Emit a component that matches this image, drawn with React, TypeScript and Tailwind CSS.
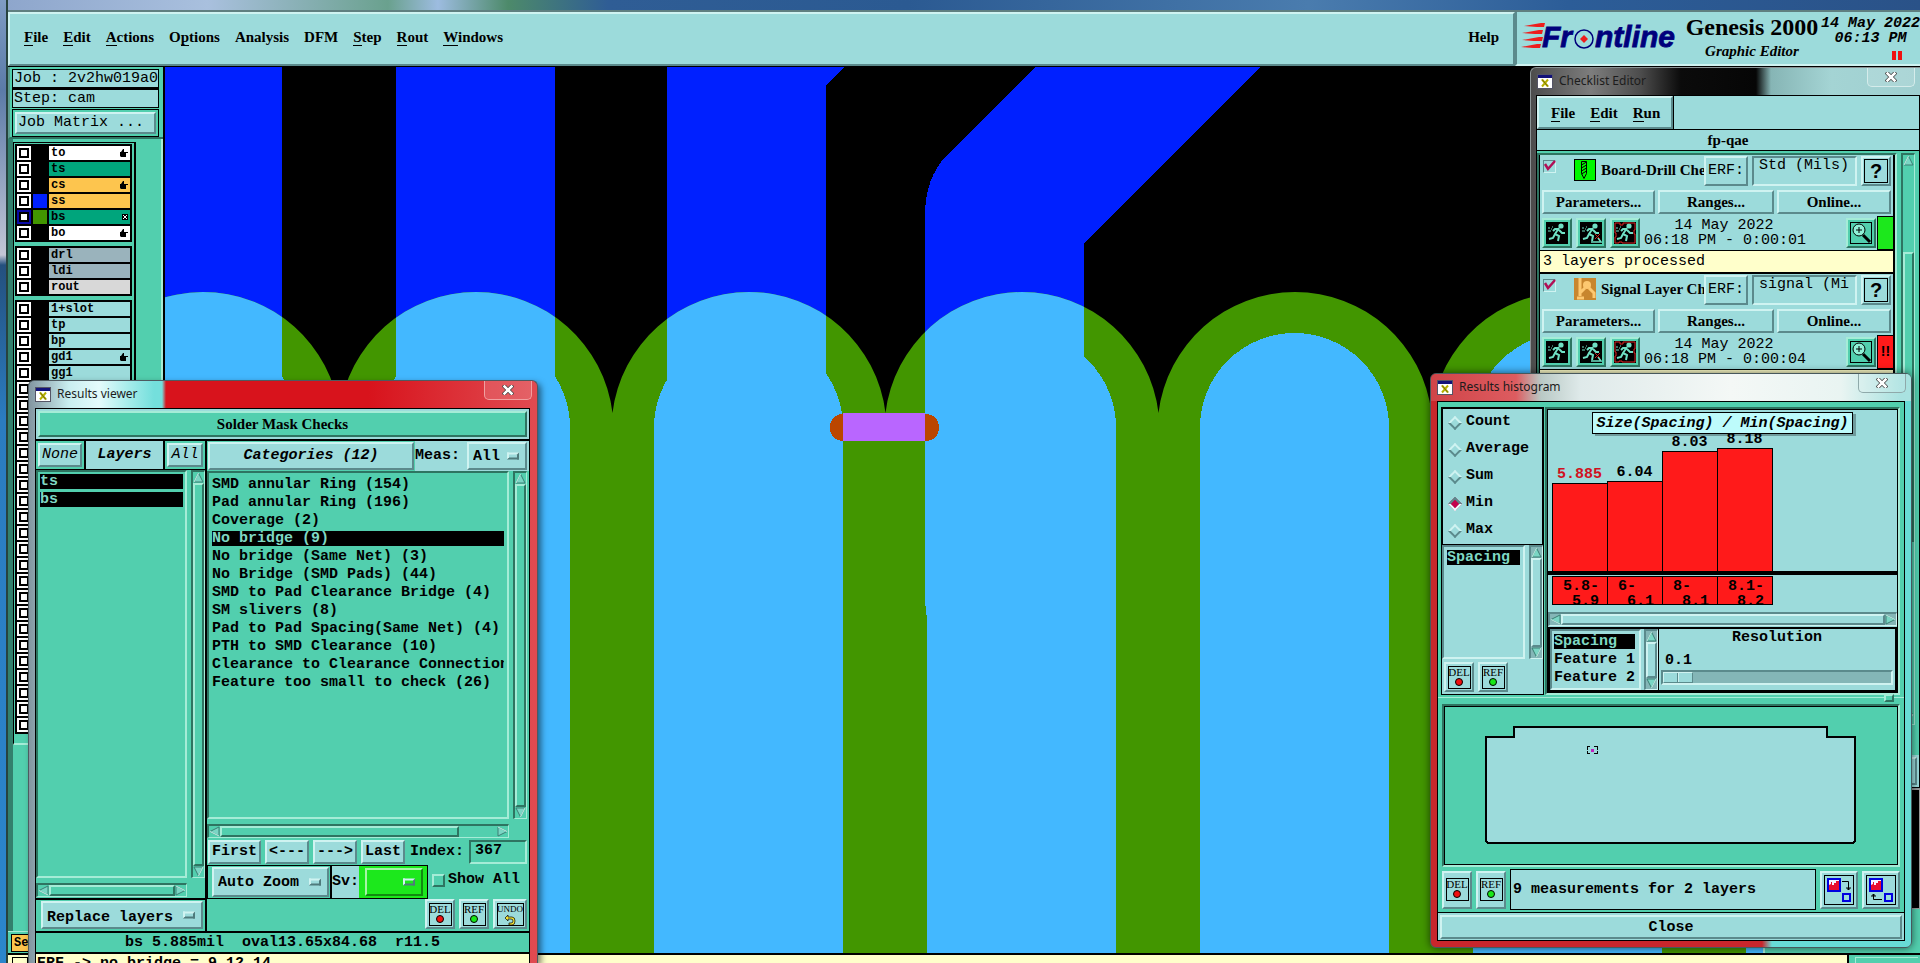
import React, { useState } from 'react';

const SERIF = "font-['Liberation_Serif',serif] font-bold text-[15px]";
const MONO = "font-['Liberation_Mono',monospace] text-[15px]";
const raised =
  'border-2 border-t-[#cff3f1] border-l-[#cff3f1] border-r-[#5b8a8c] border-b-[#5b8a8c] bg-[#9cdbdb]';
const sunken =
  'border-2 border-t-[#5b8a8c] border-l-[#5b8a8c] border-r-[#cff3f1] border-b-[#cff3f1] bg-[#9cdbdb]';
const raisedGreen =
  'border-2 border-t-[#a5ecd7] border-l-[#a5ecd7] border-r-[#2e7461] border-b-[#2e7461] bg-[#52cfae]';
const sunkenGreen =
  'border-2 border-t-[#2e7461] border-l-[#2e7461] border-r-[#a5ecd7] border-b-[#a5ecd7] bg-[#52cfae]';

const MenuItem = ({ label, mark }: { label: string; mark?: number }) => (
  <button className={`${SERIF} leading-[18px] whitespace-pre`}>
    {mark === undefined ? (
      label
    ) : (
      <>
        {label.slice(0, mark)}
        <span className="border-b border-black">{label[mark]}</span>
        {label.slice(mark + 1)}
      </>
    )}
  </button>
);

const XIcon = () => (
  <svg className="w-4 h-[15px] shrink-0" viewBox="0 0 16 15">
    <rect x="0.5" y="0.5" width="15" height="14" fill="#fff" stroke="#556" />
    <rect x="1" y="1" width="14" height="3" fill="#12127a" />
    <path d="M5 5.500l6 7M11 5.500l-6 7" stroke="#b5b000" strokeWidth="2" />
    <path d="M5 5.500l6 7" stroke="#77700a" />
  </svg>
);

const TitleBar = ({ title, closeClass }: { title: string; closeClass: string }) => (
  <div className="flex items-start justify-between h-[27px] pl-[6px] pr-[5px]">
    <div className="flex items-center gap-[6px] pt-[5px]">
      <XIcon />
      <span className="font-['Noto_Sans',sans-serif] text-xs leading-4 text-[#1c1c1c]">{title}</span>
    </div>
    <button
      aria-label={`Close ${title}`}
      className={`w-12 h-[19px] flex items-center justify-center border border-t-0 rounded-b-[5px] ${closeClass}`}
    >
      <svg className="w-3 h-[10px]" viewBox="0 0 12 10">
        <path d="M2.500 1.500l7 7M9.500 1.500l-7 7" stroke="#444" strokeWidth="4" strokeLinecap="square" />
        <path d="M2.500 1.500l7 7M9.500 1.500l-7 7" stroke="#fff" strokeWidth="2.500" strokeLinecap="square" />
      </svg>
    </button>
  </div>
);

const Arrow = ({ dir }: { dir: 'up' | 'down' | 'left' | 'right' }) => {
  const turn = { up: 0, right: 90, down: 180, left: 270 }[dir];
  return (
    <svg className="size-[11px] shrink-0" viewBox="0 0 11 11">
      <g transform={`rotate(${turn} 5.5 5.5)`}>
        <path d="M5.500 1L10 10H1z" fill="#7ad6c4" stroke="#3c7f74" />
        <path d="M1 10L5.500 1" stroke="#c9f3ea" />
      </g>
    </svg>
  );
};

interface ScrollProps {
  horizontal?: boolean;
  teal?: boolean;
  before?: string;
  after?: string;
}

const Scroll: React.FC<ScrollProps> = ({ horizontal, teal, before = 'grow-0', after = 'grow-0' }) => (
  <div
    aria-hidden
    className={`flex shrink-0 ${horizontal ? 'h-[14px]' : 'flex-col w-[14px]'} ${
      teal ? `${sunken} bg-[#84b6b7]` : `${sunkenGreen} bg-[#45a88f]`
    } border-b border-r`}
  >
    <Arrow dir={horizontal ? 'left' : 'up'} />
    <div className={`basis-0 ${before}`} />
    <div className={`basis-0 grow-[10] ${teal ? raised : raisedGreen}`} />
    <div className={`basis-0 ${after}`} />
    <Arrow dir={horizontal ? 'right' : 'down'} />
  </div>
);

const OptionMenu = ({ label, value, className }: { label: string; value: string; className: string }) => (
  <div className={`relative ${className}`}>
    <select
      aria-label={label}
      className={`appearance-none w-full h-full pl-1 outline-none ${MONO} font-bold leading-none`}
    >
      <option>{value}</option>
    </select>
    <span className="absolute right-[6px] top-1/2 -translate-y-1/2 w-3 h-[7px] pointer-events-none border-2 border-t-[#cff3f1] border-l-[#cff3f1] border-r-[#4f7b7c] border-b-[#4f7b7c]" />
  </div>
);

const DotButton = ({ text, className = 'h-[30px]' }: { text: 'DEL' | 'REF' | 'UNDO'; className?: string }) => (
  <button
    className={`${raised} flex items-center justify-center ${text === 'UNDO' ? 'w-[34px]' : 'w-[30px]'} ${className}`}
  >
    <span
      className={`flex flex-col items-center border border-black h-[23px] ${text === 'UNDO' ? 'w-[27px]' : 'w-[23px]'}`}
    >
      <span
        className={`font-['Liberation_Serif',serif] leading-[11px] ${text === 'UNDO' ? 'text-[9px]' : 'text-[11px]'}`}
      >
        {text}
      </span>
      {text === 'UNDO' ? (
        <svg className="w-3 h-[10px]" viewBox="0 0 12 10">
          <path d="M4 0L1 3l3 3V4h3q2 0 2 2t-2 2H5v2h3q3 0 3-4t-3-4H4z" fill="#f5e53a" stroke="#000" strokeWidth="0.7" />
        </svg>
      ) : (
        <span
          className={`size-2 rounded-full border border-black ${text === 'DEL' ? 'bg-[#f01010]' : 'bg-[#18e818]'}`}
        />
      )}
    </span>
  </button>
);

/* ---------- main window ---------- */

const Logo = () => (
  <svg className="w-[162px] h-[36px] shrink-0" viewBox="0 0 162 36">
    <g fill="#ee1c1c">
      <path d="M3 6L20 3h4l-1 4h-7zM1 13l17-3h4l-1 4h-7zM1 20l17-3h4l-1 4h-8zM0 27l16-3h4l-1 4h-7z" />
    </g>
    <g
      fill="#00007c"
      stroke="#00007c"
      strokeWidth="0.8"
      fontFamily="Liberation Sans, sans-serif"
      fontWeight="bold"
      fontStyle="italic"
      fontSize="30"
    >
      <text x="21" y="27">Fr</text>
      <text x="74" y="27">ntline</text>
    </g>
    <circle cx="63" cy="19" r="9" fill="#9cdbdb" stroke="#00007c" strokeWidth="1.5" />
    <path d="M63 15l4 4-4 4-4-4z" fill="#ee1c1c" />
  </svg>
);

const MENUS: [string, number?][] = [
  ['File', 0],
  ['Edit', 0],
  ['Actions', 0],
  ['Options', 1],
  ['Analysis'],
  ['DFM'],
  ['Step', 0],
  ['Rout', 0],
  ['Windows', 0],
];

const TopBar = () => (
  <header className="flex h-14 shrink-0 border-t-2 border-[#5f7f80] bg-[#9cdbdb]">
    <nav className={`${raised} flex-1 flex items-center justify-between pl-[14px] pr-[14px] pb-1`}>
      <div className="flex gap-[15px]">
        {MENUS.map(([label, mark]) => (
          <MenuItem key={label} label={label} mark={mark} />
        ))}
      </div>
      <MenuItem label="Help" />
    </nav>
    <div className="w-[405px] shrink-0 flex border-l-2 border-l-[#5b8a8c] border-b-2 border-b-[#cff3f1] pl-1">
      <div className="pt-2">
        <Logo />
      </div>
      <div className="w-[138px] shrink-0 flex flex-col items-center whitespace-nowrap font-['Liberation_Serif',serif] font-bold">
        <span className="text-2xl leading-[30px]">Genesis 2000</span>
        <span className="text-[15px] leading-[18px] italic">Graphic Editor</span>
      </div>
      <div className={`${MONO} font-bold italic whitespace-nowrap leading-[15px] pt-1 flex flex-col items-center`}>
        <span>14 May 2022</span>
        <span>06:13 PM</span>
        <span className="flex gap-[2px] pt-[5px] pl-[52px]">
          <i className="w-1 h-[9px] bg-[#f01010]" />
          <i className="w-1 h-[9px] bg-[#f01010]" />
        </span>
      </div>
    </div>
  </header>
);

interface Layer {
  name: string;
  bg: string;
  swatch?: string;
  mark?: 'hand' | 'grid';
  active?: boolean;
}

const BLUE = 'bg-[#9cdbdb]';
const GROUPS: Layer[][] = [
  [
    { name: 'to', bg: 'bg-white', mark: 'hand' },
    { name: 'ts', bg: 'bg-[#00a57c]' },
    { name: 'cs', bg: 'bg-[#fdc54e]', mark: 'hand' },
    { name: 'ss', bg: 'bg-[#fdc54e]', swatch: 'bg-[#0020ff]' },
    { name: 'bs', bg: 'bg-[#00a57c]', swatch: 'bg-[#429600]', mark: 'grid', active: true },
    { name: 'bo', bg: 'bg-white', mark: 'hand' },
  ],
  [
    { name: 'drl', bg: 'bg-[#9ab3bc]' },
    { name: 'ldi', bg: 'bg-[#9ab3bc]' },
    { name: 'rout', bg: 'bg-[#d8d8d8]' },
  ],
  [
    { name: '1+slot', bg: BLUE },
    { name: 'tp', bg: BLUE },
    { name: 'bp', bg: BLUE },
    { name: 'gd1', bg: BLUE, mark: 'hand' },
    { name: 'gg1', bg: BLUE },
    ...Array.from({ length: 22 }, () => ({ name: '', bg: BLUE })),
  ],
];

const LayerRow = ({ layer }: { layer: Layer }) => (
  <label className="flex gap-[2px] h-[14px]">
    <input
      type="checkbox"
      aria-label={layer.name || 'layer'}
      className={`appearance-none size-[14px] bg-white ${
        layer.active
          ? 'shadow-[inset_0_0_0_2px_#0b0ba8,inset_0_0_0_4px_black]'
          : 'shadow-[inset_0_0_0_2px_white,inset_0_0_0_4px_black]'
      }`}
    />
    <span className={`w-[14px] ${layer.swatch ?? 'bg-black'}`} />
    <span
      className={`flex-1 flex items-center justify-between pl-[2px] pr-[2px] font-['Liberation_Mono',monospace] font-bold text-xs leading-[14px] ${layer.bg}`}
    >
      {layer.name}
      {layer.mark === 'hand' && (
        <svg className="w-2 h-2" viewBox="0 0 8 8">
          <path d="M0 3h1l2-3h1v3h4v1H6v4H1L0 7z" />
        </svg>
      )}
      {layer.mark === 'grid' && (
        <svg className="size-[6px]" viewBox="0 0 6 6" shapeRendering="crispEdges">
          <path d="M0 0h6v6H0z" />
          <path d="M1 1h1v1H1zM4 1h1v1H4zM1 4h1v1H1zM4 4h1v1H4zM2 2h2v2H2z" fill="#fff" />
        </svg>
      )}
    </span>
  </label>
);

const Sidebar = () => (
  <aside className="w-[157px] shrink-0 flex flex-col border-r-2 border-black bg-[#52cfae]">
    <div className={`border-l-2 border-l-[#5d9c90] p-[2px] pr-1 pb-0 border-b-2 border-b-[#2e7461] ${MONO}`}>
      <div className="border border-black bg-[#9cdbdb] h-[19px] leading-[18px] pl-px whitespace-nowrap overflow-hidden">
        Job : 2v2hw019a0
      </div>
      <div className="border border-black border-t-2 bg-[#9cdbdb] h-5 leading-[17px] pl-px">Step: cam</div>
      <div className="mt-px border border-black p-[2px]">
        <button className={`${raised} block w-full h-[22px] leading-[18px] text-left pl-px`}>Job Matrix ...</button>
      </div>
    </div>
    <div className="flex flex-1 min-h-0 border-l-[5px] border-l-[#33806d]">
      <div className="w-[123px] flex flex-col">
        <div className="mt-[3px] border border-black border-r-2 pl-px pr-[2px] pt-px pb-[9px] flex flex-col gap-1 border-b-2 border-b-[#a5ecd7]">
          {GROUPS.map((group, i) => (
            <div key={i} className="bg-black p-[2px] flex flex-col gap-[2px]">
              {group.map((layer, j) => (
                <LayerRow key={j} layer={layer} />
              ))}
            </div>
          ))}
        </div>
      </div>
      <div className="flex-1 border-r-2 border-[#a5ecd7]" />
    </div>
    <div className="h-[22px] border-t border-[#a5ecd7] p-[2px] pb-1 pl-[3px]">
      <button className="block w-[60px] h-[18px] border border-black bg-[#fdc54e] text-left pl-[2px] font-['Liberation_Mono',monospace] font-bold text-xs">
        Sel
      </button>
    </div>
  </aside>
);

const PITCH = 273;
const CENTRES = [0, 1, 2, 3, 4, 5, 6].map((i) => 203 + i * PITCH);
const TRACES = [
  'M165 0H282V1000H165z',
  'M396 0H555V1000H396z',
  'M667 0V1000H826V86L844 67V0z',
  'M1035 67L947 155Q925 178 925 215V600Q926 615 928 622H1084V243L1260 67z',
];

const BoardCanvas = () => (
  <svg
    className="flex-1 min-w-0 h-full bg-black"
    viewBox="165 67 1598 886"
    preserveAspectRatio="xMinYMin slice"
    shapeRendering="crispEdges"
  >
    <defs>
      <clipPath id="mask">
        {CENTRES.map((c) => (
          <rect key={c} x={c - 137.5} y="292" width="275" height="1200" rx="137.5" />
        ))}
      </clipPath>
    </defs>
    {TRACES.map((d) => (
      <path key={d} d={d} fill="#0020ff" />
    ))}
    <g clipPath="url(#mask)">
      <rect x="165" y="67" width="1800" height="900" fill="#429600" />
      {TRACES.map((d) => (
        <path key={d} d={d} fill="#43b8ff" />
      ))}
      {CENTRES.map((c) => (
        <rect key={c} x={c - 95} y="333" width="189" height="1200" rx="94.5" fill="#43b8ff" />
      ))}
    </g>
    <rect x="830" y="414" width="109" height="27" rx="13" fill="#bb4600" />
    <rect x="843" y="413" width="82" height="28" fill="#b966ff" />
  </svg>
);

/* ---------- results viewer ---------- */

const CATEGORIES = [
  'SMD annular Ring (154)',
  'Pad annular Ring (196)',
  'Coverage (2)',
  'No bridge (9)',
  'No bridge (Same Net) (3)',
  'No Bridge (SMD Pads) (44)',
  'SMD to Pad Clearance Bridge (4)',
  'SM slivers (8)',
  'Pad to Pad Spacing(Same Net) (4)',
  'PTH to SMD Clearance (10)',
  'Clearance to Clearance Connection',
  'Feature too small to check (26)',
];

const ListBox = ({ items, selected, className }: { items: string[]; selected: string[]; className: string }) => (
  <ul role="listbox" className={`${MONO} font-bold overflow-hidden ${className}`}>
    {items.map((item) => {
      const on = selected.includes(item);
      return (
        <li key={item} role="option" aria-selected={on} className="h-[18px] flex items-center">
          <span
            className={`block w-full h-[15px] leading-[15px] whitespace-nowrap overflow-hidden ${
              on ? 'bg-black text-[#7fd8c4]' : ''
            }`}
          >
            {item}
          </span>
        </li>
      );
    })}
  </ul>
);

const ResultsViewer = () => {
  const [category] = useState('No bridge (9)');
  return (
    <section className="absolute left-[28px] top-[380px] bottom-0 w-[510px] flex flex-col rounded-t-md border border-b-0 border-[#4d5a60] overflow-hidden shadow-[3px_3px_6px_rgba(0,0,0,0.5)] bg-[linear-gradient(90deg,#8295a0_0,#c9eef0_40px,#e4fbfc_70px,#a5ecea_100px,#74dfdc_125px,#74dfdc_133px,#d8131c_137px,#d8131c_340px,#e04a50_505px)]">
      <TitleBar title="Results viewer" closeClass="border-[#f0a0a0] bg-[#ffffff22]" />
      <div className="flex-1 min-h-0 ml-[6px] mr-[7px] flex flex-col border border-b-0 border-black bg-[#52cfae]">
        <div className="bg-[#9cdbdb] p-[2px] border-b-2 border-black">
          <div className={`${raisedGreen} ${SERIF} h-[26px] leading-[22px] text-center`}>Solder Mask Checks</div>
        </div>
        <div className="flex flex-1 min-h-0">
          <div className="w-[171px] shrink-0 flex flex-col border-r-2 border-black">
            <div className={`flex h-[29px] border-b border-black italic ${MONO}`}>
              <div className="w-[50px] p-[2px] border-r-2 border-black">
                <button className={`${raised} w-full h-6 leading-5`}>None</button>
              </div>
              <div className="flex-1 bg-[#9cdbdb] font-bold text-center leading-[28px] border-r-2 border-black">
                Layers
              </div>
              <div className="w-10 p-[2px]">
                <button className={`${raised} w-full h-6 leading-5`}>All</button>
              </div>
            </div>
            <div className="flex flex-1 gap-1 min-h-0">
              <ListBox
                items={['ts', 'bs']}
                selected={['ts', 'bs']}
                className={`flex-1 pl-[2px] pr-[2px] ${sunkenGreen}`}
              />
              <Scroll />
            </div>
            <div className="pr-[18px] pt-[5px] pb-px">
              <Scroll horizontal />
            </div>
            <div className="border-t-2 border-black pt-px pb-[2px] pl-[5px] pr-[2px]">
              <OptionMenu label="Layer mode" value="Replace layers" className={`${raised} h-7`} />
            </div>
          </div>
          <div className="flex-1 min-w-0 flex flex-col">
            <div className={`flex h-[30px] bg-[#9cdbdb] font-bold ${MONO}`}>
              <div className="w-[208px] bg-[#52cfae] p-px">
                <button className={`${raised} italic w-full h-7`}>Categories (12)</button>
              </div>
              <label className="flex-1 leading-[30px]">Meas:</label>
              <OptionMenu label="Meas:" value="All" className={`${raised} w-[60px] h-7 mr-[2px] mt-px`} />
            </div>
            <div className="flex flex-1 gap-1 min-h-0 pr-[2px]">
              <ListBox
                items={CATEGORIES}
                selected={[category]}
                className={`flex-1 pt-[2px] pl-[3px] pr-[3px] ${sunkenGreen}`}
              />
              <Scroll />
            </div>
            <div className="pr-5 pt-[5px]">
              <Scroll horizontal after="grow-[1.6]" />
            </div>
            <div className={`flex items-center gap-1 pt-[2px] pl-px pr-[2px] font-bold ${MONO}`}>
              <button className={`${raised} w-[53px] h-6 leading-5`}>First</button>
              <button className={`${raised} w-11 h-6 leading-5`}>&lt;---</button>
              <button className={`${raised} w-11 h-6 leading-5`}>---&gt;</button>
              <button className={`${raised} w-11 h-6 leading-5`}>Last</button>
              <label htmlFor="index" className="flex-1 pl-px">
                Index:
              </label>
              <input
                id="index"
                defaultValue="367"
                className={`${sunkenGreen} w-[58px] h-6 pl-1 pb-1 leading-5 outline-none`}
              />
            </div>
            <div className={`flex mt-px h-[34px] font-bold ${MONO}`}>
              <div className="flex border border-black w-[221px]">
                <div className="flex-1 p-px pl-1 border-r-2 border-black">
                  <OptionMenu label="Zoom mode" value="Auto Zoom" className={`${raised} h-[30px]`} />
                </div>
                <span className="w-[27px] bg-[#9cdbdb] leading-8">Sv:</span>
                <div className="w-[68px] bg-[#1ce81c] p-[2px] pl-[6px] pr-1">
                  <OptionMenu
                    label="Sv:"
                    value=""
                    className="h-7 border-2 border-t-[#a6f5a6] border-l-[#a6f5a6] border-r-[#118a11] border-b-[#118a11]"
                  />
                </div>
              </div>
              <label className="flex items-center gap-[3px] pl-1 pb-1">
                <input type="checkbox" className={`appearance-none size-[13px] ${raisedGreen} border`} />
                Show All
              </label>
            </div>
            <div className="flex justify-end gap-1 pr-[2px] pb-[2px]">
              <DotButton text="DEL" />
              <DotButton text="REF" />
              <DotButton text="UNDO" />
            </div>
          </div>
        </div>
        <div className={`h-[23px] border-y-2 border-black font-bold text-center whitespace-pre leading-[19px] ${MONO}`}>
          {'bs 5.885mil  oval13.65x84.68  r11.5'}
        </div>
        <div className={`h-[9px] bg-[#ffffcb] font-bold overflow-hidden whitespace-pre pl-px pt-[2px] leading-[15px] ${MONO}`}>
          {'ERF -> no bridge = 9 12 14'}
        </div>
      </div>
    </section>
  );
};

/* ---------- checklist editor ---------- */

const Runner = ({ kind }: { kind: number }) => (
  <button
    aria-label={['Run', 'Run on features', 'Run all'][kind]}
    className={`${raisedGreen} size-[30px] flex items-center justify-center`}
  >
    <svg className="size-[22px]" viewBox="0 0 22 22">
      <rect width="22" height="22" />
      <g stroke="#6fe0c4" fill="none" strokeWidth="2">
        <circle cx="15" cy="4" r="1.6" fill="#6fe0c4" />
        <path d="M13 6l-4 6 4 2-1 5M9 12l-2 4-4 1M13 7H9L7 9M13 8l3 3h3" />
        <path d="M2 6h2M6 5h1M2 9h3M5 7h1" strokeWidth="1" />
        {kind === 1 && <path d="M11 20h10l-3-4" strokeWidth="1.5" />}
      </g>
      {kind === 1 && <path d="M15 12l5 5M20 12l-5 5" stroke="#cc2222" />}
      {kind === 2 && (
        <path d="M1 1h5v2h3V1h12v7h-1v4h1v9H8v-1H5v1H1v-6h1v-4H1z" fill="none" stroke="#d22" />
      )}
    </svg>
  </button>
);

const DrillIcon = () => (
  <svg className="size-[22px] shrink-0" viewBox="0 0 22 22">
    <rect x="0.5" y="0.5" width="21" height="21" fill="#00f800" stroke="#000" />
    <path d="M7.500 2.500h5v12l-2.500 5-2.500-5zM7.500 6l5-3M7.500 9l5-3M7.500 12l5-3M7.500 15l5-3" fill="none" stroke="#000" />
  </svg>
);

const SignalIcon = () => (
  <svg className="size-[22px] shrink-0" viewBox="0 0 22 22">
    <rect width="22" height="22" fill="#c8862e" />
    <path d="M6 0v18M3 20h7M11 10l-5 5M15 10l5 5v5" stroke="#fdc870" strokeWidth="3" fill="none" />
    <circle cx="13" cy="7" r="4" fill="#fdc870" />
  </svg>
);

interface CheckProps {
  id: string;
  name: string;
  icon: React.ReactNode;
  erf: string;
  time: string;
  ok?: boolean;
  message?: string;
}

const CheckItem: React.FC<CheckProps> = ({ id, name, icon, erf, time, ok, message }) => (
  <div className="bg-[#9cdbdb] border-l border-r-2 border-black">
    <div className="flex pl-[3px] pr-[2px] pt-px h-8">
      <input
        id={id}
        type="checkbox"
        defaultChecked
        className="appearance-none size-[13px] mt-1 shrink-0 border border-t-[#5b8a8c] border-l-[#5b8a8c] border-r-[#cff3f1] border-b-[#cff3f1]"
      />
      <svg className="size-[13px] -ml-[13px] mt-[3px] shrink-0 pointer-events-none" viewBox="0 0 13 13">
        <path d="M2 5l3 5 7-8" fill="none" stroke="#b00f55" strokeWidth="2.500" />
      </svg>
      <span className="pl-[18px] pt-[3px] shrink-0">{icon}</span>
      <label htmlFor={id} className={`${SERIF} w-[108px] pl-[5px] leading-7 shrink-0 whitespace-nowrap overflow-hidden`}>
        {name}
      </label>
      <button className={`${raised} ${MONO} w-11 h-[30px] shrink-0`}>ERF:</button>
      <input
        aria-label={`${name} ERF`}
        defaultValue={erf}
        className={`${sunken} ${MONO} ml-1 w-[105px] shrink-0 h-[30px] pl-[5px] pb-3 outline-none`}
      />
      <button className={`${raised} ml-1 flex-1 h-[30px] p-px`}>
        <span className="flex items-center justify-center h-full border border-black font-['Liberation_Sans',sans-serif] font-bold text-xl">
          ?
        </span>
      </button>
    </div>
    <div className={`flex gap-[3px] mt-[3px] pl-[2px] pr-[2px] ${SERIF}`}>
      <button className={`${raised} w-[113px] h-6 leading-5`}>Parameters...</button>
      <button className={`${raised} w-[116px] h-6 leading-5`}>Ranges...</button>
      <button className={`${raised} flex-1 h-6 leading-5`}>Online...</button>
    </div>
    <div className="flex mt-[2px] pl-[2px] h-[34px]">
      <div className="flex items-center gap-1">
        {[0, 1, 2].map((kind) => (
          <Runner key={kind} kind={kind} />
        ))}
      </div>
      <div className={`flex-1 leading-[15px] whitespace-pre pt-[2px] pl-1 ${MONO}`}>
        <div className="w-40 text-center">14 May 2022</div>
        <div>{time}</div>
      </div>
      <div className="flex items-center pr-px">
        <button
          aria-label="View results"
          className={`${raisedGreen} size-[30px] flex items-center justify-center`}
        >
          <svg className="size-[22px]" viewBox="0 0 22 22">
            <rect x="0.5" y="0.5" width="21" height="21" fill="none" stroke="#000" />
            <path d="M13 13l7 7" stroke="#000" strokeWidth="3" />
            <circle cx="9" cy="8" r="6" fill="#8ff0d6" stroke="#000" />
            <path d="M6 8h6M9 5v6" stroke="#000" />
          </svg>
        </button>
      </div>
      <div
        className={`w-4 border border-black border-r-0 font-['Liberation_Sans',sans-serif] font-bold text-sm text-center leading-[30px] ${
          ok ? 'bg-[#1ce81c]' : 'bg-[#ff1a1a]'
        }`}
      >
        {ok ? '' : '!!'}
      </div>
    </div>
    <div className={`h-6 border-t border-b-2 border-black bg-[#ffffcb] pl-[3px] leading-[21px] ${MONO}`}>{message}</div>
  </div>
);

const ChecklistEditor = () => (
  <section className="absolute left-[1530px] right-0 top-[67px] h-[722px] flex flex-col rounded-tl-md border border-r-0 border-[#8b9394] overflow-hidden bg-[linear-gradient(90deg,#4c4c4c_0,#7d7d7d_60px,#4c4c4c_110px,#0b0b0b_150px,#060606_225px,#86b5b5_240px,#a4d4d4_300px,#9fcfd0_390px)]">
    <TitleBar title="Checklist Editor" closeClass="border-[#d5eceb] bg-[#ffffff22]" />
    <div className="flex-1 min-h-0 ml-[5px] flex flex-col border border-black bg-[#52cfae]">
      <div className="flex bg-[#9cdbdb]">
        <nav className={`${raised} flex gap-[15px] items-center w-[136px] h-[33px] pl-3`}>
          <MenuItem label="File" mark={0} />
          <MenuItem label="Edit" mark={0} />
          <MenuItem label="Run" mark={0} />
        </nav>
        <div className="border-l border-black" />
      </div>
      <div className={`border-y border-black bg-[#9cdbdb] h-[22px] leading-5 text-center ${SERIF}`}>fp-qae</div>
      <div className="flex flex-1 min-h-0 pt-[2px]">
        <div className={`${sunkenGreen} flex-1 min-w-0 mr-1 flex flex-col overflow-hidden`}>
          <CheckItem
            id="drill"
            name="Board-Drill Che"
            icon={<DrillIcon />}
            erf="Std (Mils)"
            time="06:18 PM - 0:00:01"
            ok
            message="3 layers processed"
          />
          <CheckItem
            id="signal"
            name="Signal Layer Ch"
            icon={<SignalIcon />}
            erf="signal (Mi"
            time="06:18 PM - 0:00:04"
          />
        </div>
        <div className="flex mr-1 mb-[30px]">
          <Scroll before="grow-[3]" after="grow-[6]" />
        </div>
      </div>
      <div className="h-8 bg-[#9cdbdb] p-[2px]">
        <button className={`${raised} ${SERIF} w-full h-7`}>Close</button>
      </div>
    </div>
  </section>
);

/* ---------- results histogram ---------- */

const STATS = ['Count', 'Average', 'Sum', 'Min', 'Max'];

// height is the bar's length in pixels above the base line
const BARS = [
  { value: '5.885', height: 88, from: '5.8-', to: '5.9', hot: true },
  { value: '6.04', height: 90, from: '6-', to: '6.1' },
  { value: '8.03', height: 120, from: '8-', to: '8.1' },
  { value: '8.18', height: 123, from: '8.1-', to: '8.2' },
];

const SwapIcon = ({ back }: { back?: boolean }) => (
  <svg className="size-[30px]" viewBox="0 0 30 30">
    <rect x="0.5" y="0.5" width="29" height="29" fill="none" stroke="#000" />
    <rect x="4" y="4" width="12" height="12" fill="#f5f5ff" stroke="#0000e0" strokeWidth="2" />
    <path d="M5 15V10l2-1V7h1v3h2V8h2V6h3v9z" fill="#e81030" />
    <rect x="19" y="19" width="7" height="7" fill="none" stroke="#0000e0" strokeWidth="2" />
    {back ? (
      <path d="M16 24.500H7.500V19M5 21h5M6 20h3" fill="none" stroke="#000" />
    ) : (
      <path d="M18 6.500h6.500V15M22 13h5M23 14h3" fill="none" stroke="#000" />
    )}
  </svg>
);

const Histogram = () => (
  <div className="flex-1 min-w-0 border-2 border-t-[#2e7461] border-l-[#2e7461] border-r-[#a5ecd7] border-b-[#a5ecd7]">
    <div className="border border-black bg-[#9cdbdb] flex flex-col h-full">
      <div className="h-[161px] flex flex-col justify-between">
        <div
          className={`mt-[2px] mx-auto border border-black bg-[#bdfbfb] px-[3px] h-[22px] leading-[22px] shadow-[3px_2px_0_#6f9b9c] font-bold italic whitespace-nowrap ${MONO}`}
        >
          Size(Spacing) / Min(Spacing)
        </div>
        <div className="flex items-end pl-1 h-0">
          {BARS.map((bar) => (
            <div key={bar.value} className={`w-[55px] font-bold text-center leading-[17px] ${MONO}`}>
              <div className={bar.hot ? 'text-[#d01020]' : ''}>{bar.value}</div>
              <div
                className="border border-r-0 border-b-0 border-black bg-[#ff1a1a] shadow-[1px_0_0_black]"
                style={{ height: bar.height }}
              />
            </div>
          ))}
        </div>
      </div>
      <div className="h-1 bg-black" />
      <div className="flex pl-1 pt-px h-[37px]">
        {BARS.map((bar) => (
          <div
            key={bar.from}
            className={`w-[55px] h-[29px] border border-r-0 border-black bg-[#ff1a1a] shadow-[1px_0_0_black] pl-[10px] pt-[2px] font-bold leading-[15px] ${MONO}`}
          >
            <div>{bar.from}</div>
            <div className="pl-[9px]">{bar.to}</div>
          </div>
        ))}
      </div>
      <div className="pb-px flex flex-col">
        <Scroll horizontal teal />
      </div>
      <div className="flex flex-1 min-h-0 border-2 border-black">
        <ListBox
          items={['Spacing', 'Feature 1', 'Feature 2']}
          selected={['Spacing']}
          className={`w-[91px] pt-px pl-[2px] pr-1 ${sunken}`}
        />
        <div className="bg-[#9cdbdb] flex pl-[3px]">
          <Scroll teal />
        </div>
        <div className={`flex-1 border-l border-black px-[2px] font-bold leading-[18px] ${MONO}`}>
          <label htmlFor="resolution" className="block text-center pb-[5px]">
            Resolution
          </label>
          <output className="block pl-1">0.1</output>
          <input
            id="resolution"
            type="range"
            defaultValue={0}
            className={`${sunken} appearance-none block w-full h-[15px] bg-[#84b6b7] [&::-webkit-slider-thumb]:appearance-none [&::-webkit-slider-thumb]:w-[30px] [&::-webkit-slider-thumb]:h-[11px] [&::-webkit-slider-thumb]:border [&::-webkit-slider-thumb]:border-t-[#cff3f1] [&::-webkit-slider-thumb]:border-l-[#cff3f1] [&::-webkit-slider-thumb]:border-r-[#5b8a8c] [&::-webkit-slider-thumb]:border-b-[#5b8a8c] [&::-webkit-slider-thumb]:bg-[linear-gradient(90deg,#9cdbdb_13px,#5b8a8c_13px,#5b8a8c_14px,#cff3f1_14px,#cff3f1_15px,#9cdbdb_15px)]`}
          />
        </div>
      </div>
    </div>
  </div>
);

const ResultsHistogram = () => {
  const [stat, setStat] = useState('Min');
  return (
    <section className="absolute left-[1430px] top-[373px] w-[482px] h-[575px] flex flex-col rounded-md border border-[#47585c] overflow-hidden shadow-[0_0_8px_rgba(0,0,0,0.6)] bg-[linear-gradient(90deg,#c8262c_0,#c8262c_331px,#68dbd6_341px)]">
      <div className="bg-[linear-gradient(90deg,#d04448_0,#dd5c60_85px,#b9c9c5_110px,#dfeaea_150px,#f4f8f6_300px,#e9f4f2_410px,#a9e2e0_470px)]">
        <TitleBar title="Results histogram" closeClass="border-[#8fa9aa] bg-[#ffffff22]" />
      </div>
      <div className="flex-1 min-h-0 mx-[6px] mb-[6px] flex flex-col border border-black bg-[#52cfae]">
        <div className="flex h-[293px] pt-[5px] pl-[3px] pr-1 gap-px">
          <div className="w-[103px] shrink-0 flex flex-col border border-black bg-[#9cdbdb]">
            <fieldset className={`border border-black h-[137px] font-bold ${MONO}`}>
              {STATS.map((s) => (
                <label key={s} className="flex items-center gap-[6px] h-[27px] pl-[7px]">
                  <input
                    type="radio"
                    name="stat"
                    checked={stat === s}
                    onChange={() => setStat(s)}
                    className="appearance-none size-[10px] rotate-45 border-2 border-t-[#cff3f1] border-l-[#cff3f1] border-r-[#5b8a8c] border-b-[#5b8a8c] checked:bg-[#c4004c] checked:border-t-[#5b8a8c] checked:border-l-[#5b8a8c] checked:border-r-[#e8ffff] checked:border-b-[#e8ffff]"
                  />
                  {s}
                </label>
              ))}
            </fieldset>
            <div className="flex flex-1 min-h-0 gap-1">
              <ListBox items={['Spacing']} selected={['Spacing']} className={`flex-1 pt-px pl-[3px] pr-[3px] ${sunken}`} />
              <Scroll teal />
            </div>
            <div className="flex gap-1 pt-[3px] pb-[2px] pl-[2px]">
              <DotButton text="DEL" />
              <DotButton text="REF" />
            </div>
          </div>
          <Histogram />
        </div>
        <div className="flex justify-end h-[7px] pr-[10px] border-t border-[#a5ecd7] mt-[2px]">
          <div className={`${raisedGreen} w-[10px] h-2 -mt-1 z-10`} />
        </div>
        <div className={`flex-1 min-h-0 mx-1 ${sunkenGreen}`}>
          <svg
            className="block w-full h-full border border-black"
            viewBox="0 0 455 162"
            preserveAspectRatio="none"
            shapeRendering="crispEdges"
          >
            <path
              d="M41 31H69V21H385V31H413V138L411 140H43L41 138z"
              fill="#9cdbdb"
              stroke="#000"
              strokeWidth="2"
            />
            <path d="M143 44V41h3M143 45v3h3M150 41h4v3M154 45v3h-4" fill="none" stroke="#000" />
            <rect x="147" y="43" width="3" height="3" fill="#c020c0" />
          </svg>
        </div>
        <div className="flex items-center gap-1 h-[46px] px-1 border-b border-black">
          <DotButton text="DEL" className="h-[38px]" />
          <DotButton text="REF" className="h-[38px]" />
          <div className={`flex-1 border border-black bg-[#9cdbdb] h-[41px] leading-[39px] pl-[2px] font-bold whitespace-nowrap ${MONO}`}>
            9 measurements for 2 layers
          </div>
          {[false, true].map((back) => (
            <button
              key={String(back)}
              aria-label={back ? 'Load chart' : 'Save chart'}
              className={`${raised} size-[38px] flex items-center justify-center`}
            >
              <SwapIcon back={back} />
            </button>
          ))}
        </div>
        <div className="bg-[#9cdbdb] p-[2px] pb-px">
          <button className={`${raised} block w-full h-6 leading-[22px] font-bold ${MONO}`}>Close</button>
        </div>
      </div>
    </section>
  );
};

export default function App() {
  return (
    <div className="relative flex h-screen w-full overflow-hidden text-black bg-[#52cfae]">
      <div className="w-2 shrink-0 border-r-2 border-[#27433f] bg-[linear-gradient(180deg,#7f9cc4_0,#5b7ba8_90px,#c3c6d6_255px,#24507e_265px,#2b7cc0_420px,#2b86cc_963px)]" />
      <div className="flex-1 min-w-0 flex flex-col">
        <div className="h-[10px] shrink-0 bg-[linear-gradient(90deg,#8ea6cc_0,#a9c0de_200px,#6aa18e_380px,#9dbce0_430px,#4d8a6a_500px,#2f5d95_600px,#2b5a92_900px,#4a7cae_1300px,#2c5d98_1560px,#2a5288_1912px)]" />
        <TopBar />
        <div className="flex flex-1 min-h-0 border-t border-black">
          <Sidebar />
          <BoardCanvas />
          <aside className="w-[157px] shrink-0 flex flex-col border-l-2 border-[#a5ecd7] bg-[#52cfae]">
            <div className="mt-[722px] h-[120px] border border-[#9a9a9a] bg-black" />
          </aside>
        </div>
        <footer className="flex h-[10px] shrink-0 border-t-2 border-black">
          <div className="flex-1 bg-[#ffffcb] border-r-2 border-black pl-1 pt-[2px]">
            <div className="w-4 h-2 border border-b-0 border-black" />
          </div>
          <div className="w-[71px] p-[2px] pb-0 pl-[6px]">
            <div className="h-full border-t border-l border-[#a5ecd7]" />
          </div>
        </footer>
      </div>
      <ChecklistEditor />
      <ResultsHistogram />
      <ResultsViewer />
    </div>
  );
}
